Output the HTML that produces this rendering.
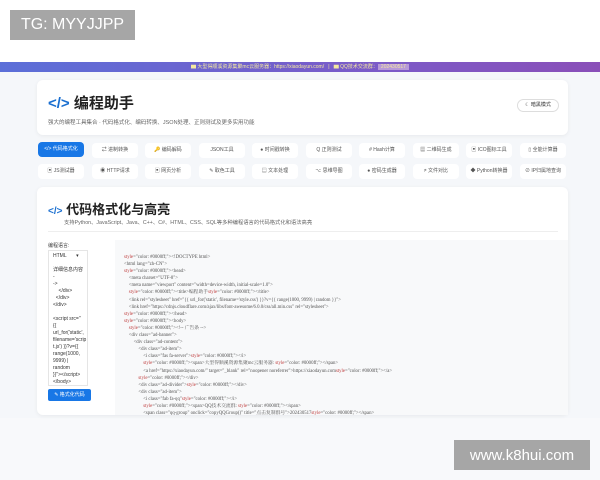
<!DOCTYPE html>
<html><head><meta charset="utf-8"><style>
*{margin:0;padding:0;box-sizing:border-box}
body{width:600px;height:480px;overflow:hidden;background:#f5f7fa;font-family:"Liberation Sans","Noto Sans CJK SC",sans-serif;position:relative}
.top{position:absolute;left:0;top:0;width:600px;height:62px;background:#fff}
.wm{position:absolute;background:#a6a6a6;color:#fff;font-size:16px;display:flex;align-items:center;justify-content:center}
.banner{position:absolute;left:0;top:62px;width:600px;height:10px;background:linear-gradient(90deg,#5b6fd8,#7a5bc9 60%,#8a4fb8);color:#f4e9a0;font-size:5px;text-align:center;line-height:10px}
.card{position:absolute;background:#fff;border-radius:6px;box-shadow:0 1px 4px rgba(0,0,0,.06)}
.h1{position:absolute;left:48px;top:92px;font-size:15px;font-weight:bold;color:#222}
.h1 b{color:#1a6fd0}
.sub{position:absolute;left:48px;top:118px;font-size:5.5px;color:#666}
.dark{position:absolute;left:517px;top:99px;width:42px;height:13px;border:1px solid #ddd;border-radius:7px;font-size:5px;color:#333;text-align:center;line-height:11px;background:#fff}
.tb{position:absolute;height:15px;width:46px;border-radius:4px;background:#fff;font-size:5px;color:#555;text-align:center;line-height:15px}
.tb.on{background:#1877e6;color:#fff}
.h2{position:absolute;left:48px;top:199px;font-size:13px;font-weight:bold;color:#222}
.h2 b{color:#1a6fd0;font-size:10px}
.sub2{position:absolute;left:64px;top:218px;font-size:5.3px;color:#666}
.hr{position:absolute;left:48px;top:231px;width:510px;height:1px;background:#eee}
.lbl{position:absolute;left:48px;top:242px;font-size:5px;color:#444}
.lp{position:absolute;left:48px;top:250px;width:40px;height:136px;background:#fff;border:1px solid #e5e5e5;font-size:5px;color:#333;line-height:7px;padding:2px 4px;overflow:hidden}
.btn{position:absolute;left:48px;top:389px;width:43px;height:12px;background:#1877e6;border-radius:2px;color:#fff;font-size:5px;line-height:12px;text-align:center}
.code{position:absolute;left:115px;top:240px;width:453px;height:175px;background:#f8f9fa;font-family:"Liberation Serif","Noto Serif CJK SC",serif;font-size:4.8px;line-height:7.1px;color:#555;padding:14px 9px;white-space:pre;overflow:hidden}
.r{color:#c04040}
.bot{position:absolute;left:0;top:418px;width:600px;height:62px;background:#f8f9fb}
</style></head><body>
<div class="top"></div>
<div class="bot"></div>
<div class="wm" style="left:10px;top:10px;width:125px;height:30px">TG: MYYJJPP</div>
<div class="banner">▆ 大型得顺溪资源集聚mc云服务器：https://xiaodayun.com/ &nbsp; | &nbsp; ▆ QQ技术交流群：<span style="background:#b89ad8;padding:0 3px">202430517</span></div>
<div class="card" style="left:37px;top:80px;width:531px;height:55px"></div>
<div class="h1"><b>&lt;/&gt;</b> 编程助手</div>
<div class="sub">强大的编程工具集合 · 代码格式化、编码转换、JSON处理、正则测试及更多实用功能</div>
<div class="dark">☾ 暗黑模式</div>
<div class="tb on" style="left:38px;top:142px">&lt;/&gt; 代码格式化</div>
<div class="tb" style="left:92px;top:143px">⇄ 进制转换</div>
<div class="tb" style="left:145px;top:143px">🔑 编码解码</div>
<div class="tb" style="left:199px;top:143px">JSON工具</div>
<div class="tb" style="left:252px;top:143px">● 时间戳转换</div>
<div class="tb" style="left:306px;top:143px">Q 正则测试</div>
<div class="tb" style="left:359px;top:143px"># Hash计算</div>
<div class="tb" style="left:413px;top:143px">▦ 二维码生成</div>
<div class="tb" style="left:466px;top:143px">▣ ICO图标工具</div>
<div class="tb" style="left:520px;top:143px">▯ 全能计算器</div>
<div class="tb" style="left:38px;top:164px">▣ JS测试器</div>
<div class="tb" style="left:92px;top:164px">◉ HTTP请求</div>
<div class="tb" style="left:145px;top:164px">▣ 网页分析</div>
<div class="tb" style="left:199px;top:164px">✎ 取色工具</div>
<div class="tb" style="left:252px;top:164px">▤ 文本处理</div>
<div class="tb" style="left:306px;top:164px">⌥ 思维导图</div>
<div class="tb" style="left:359px;top:164px">● 密码生成器</div>
<div class="tb" style="left:413px;top:164px">≠ 文件对比</div>
<div class="tb" style="left:466px;top:164px">◆ Python转换器</div>
<div class="tb" style="left:520px;top:164px">⊘ IP归属地查询</div>
<div class="card" style="left:37px;top:187px;width:531px;height:228px"></div>
<div class="h2"><b>&lt;/&gt;</b> 代码格式化与高亮</div>
<div class="sub2">支持Python、JavaScript、Java、C++、C#、HTML、CSS、SQL等多种编程语言的代码格式化和语法高亮</div>
<div class="hr"></div>
<div class="lbl">编程语言:</div>
<div class="lp">HTML &nbsp; &nbsp; &nbsp; ▾<br><br>详细信息内容 -<br>-&gt;<br>&nbsp; &nbsp; &lt;/div&gt;<br>&nbsp; &lt;/div&gt;<br>&lt;/div&gt;<br><br>&lt;script src="<br>{{<br>url_for('static',<br>filename='scrip<br>t.js') }}?v={{<br>range(1000,<br>9999) | random<br>}}"&gt;&lt;/script&gt;<br>&lt;/body&gt;<br>&lt;/html&gt;</div>
<div class="btn">✎ 格式化代码</div>
<div class="code"><span class="r">style</span>="color: #0000ff;"&gt;&lt;!DOCTYPE html&gt;
&lt;html lang="zh-CN"&gt;
<span class="r">style</span>="color: #0000ff;"&gt;&lt;head&gt;
    &lt;meta charset="UTF-8"&gt;
    &lt;meta name="viewport" content="width=device-width, initial-scale=1.0"&gt;
    <span class="r">style</span>="color: #0000ff;"&gt;&lt;title&gt;编程助手<span class="r">style</span>="color: #0000ff;"&gt;&lt;/title&gt;
    &lt;link rel="stylesheet" href="{{ url_for('static', filename='style.css') }}?v={{ range(1000, 9999) | random }}"&gt;
    &lt;link href="https://cdnjs.cloudflare.com/ajax/libs/font-awesome/6.0.0/css/all.min.css" rel="stylesheet"&gt;
<span class="r">style</span>="color: #0000ff;"&gt;&lt;/head&gt;
<span class="r">style</span>="color: #0000ff;"&gt;&lt;body&gt;
    <span class="r">style</span>="color: #0000ff;"&gt;&lt;!-- 广告条 --&gt;
    &lt;div class="ad-banner"&gt;
        &lt;div class="ad-content"&gt;
            &lt;div class="ad-item"&gt;
                &lt;i class="fas fa-server"&gt;<span class="r">style</span>="color: #0000ff;"&gt;&lt;/i&gt;
                <span class="r">style</span>="color: #0000ff;"&gt;&lt;span&gt;大型得顺溪资源集聚mc云服务器: <span class="r">style</span>="color: #0000ff;"&gt;&lt;/span&gt;
                &lt;a href="https://xiaodayun.com/" target="_blank" rel="noopener noreferrer"&gt;https://xiaodayun.com<span class="r">style</span>="color: #0000ff;"&gt;&lt;/a&gt;
            <span class="r">style</span>="color: #0000ff;"&gt;&lt;/div&gt;
            &lt;div class="ad-divider"&gt;<span class="r">style</span>="color: #0000ff;"&gt;&lt;/div&gt;
            &lt;div class="ad-item"&gt;
                &lt;i class="fab fa-qq"<span class="r">style</span>="color: #0000ff;"&gt;&lt;/i&gt;
                <span class="r">style</span>="color: #0000ff;"&gt;&lt;span&gt;QQ技术交流群: <span class="r">style</span>="color: #0000ff;"&gt;&lt;/span&gt;
                &lt;span class="qq-group" onclick="copyQQGroup()" title="点击复制群号"&gt;202430517<span class="r">style</span>="color: #0000ff;"&gt;&lt;/span&gt;
            <span class="r">style</span>="color: #0000ff;"&gt;&lt;/div&gt;</div>
<div class="wm" style="left:454px;top:440px;width:136px;height:30px;font-size:15px">www.k8hui.com</div>
</body></html>
